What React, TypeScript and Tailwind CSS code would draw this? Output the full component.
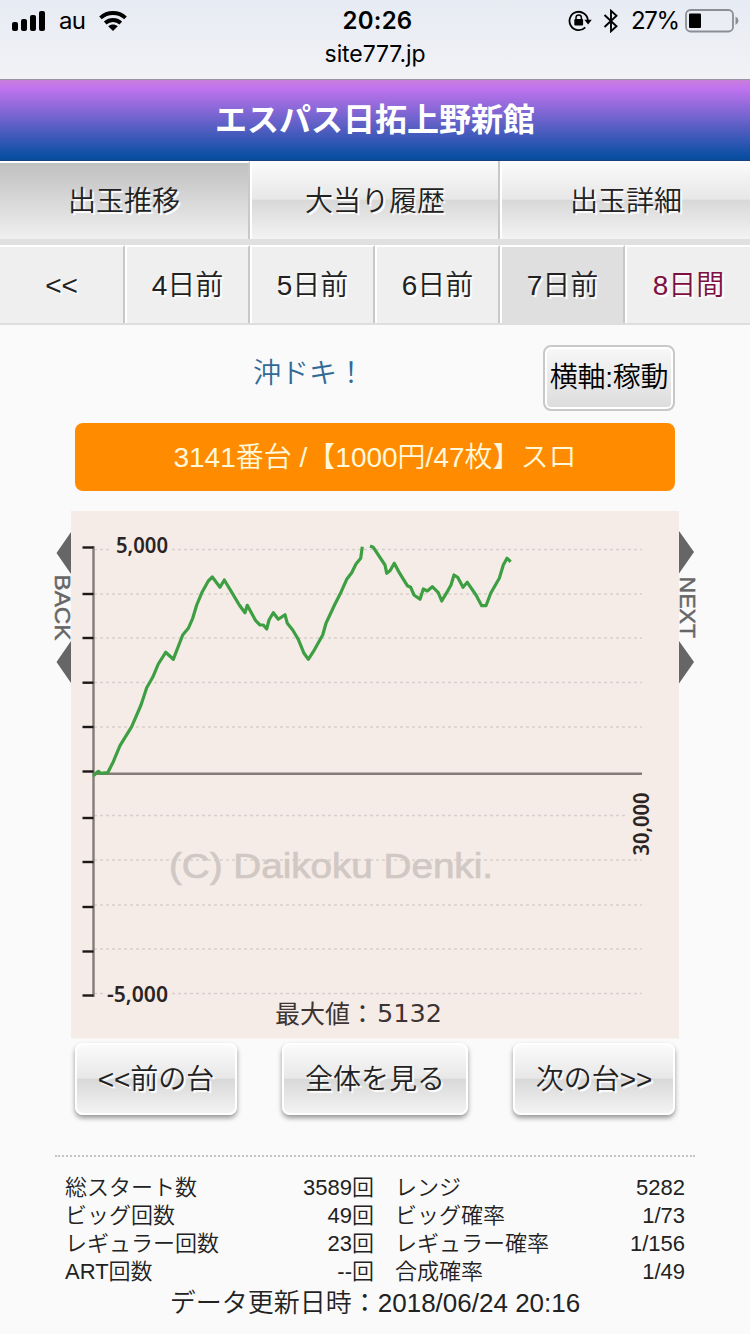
import React from "react";

const days = ["<<", "4日前", "5日前", "6日前", "7日前", "8日間"];

const stats = [
  ["総スタート数", "3589回", "レンジ", "5282"],
  ["ビッグ回数", "49回", "ビッグ確率", "1/73"],
  ["レギュラー回数", "23回", "レギュラー確率", "1/156"],
  ["ART回数", "--回", "合成確率", "1/49"],
];

const grid = [549.5, 594, 638, 682.5, 727, 815.5, 860, 905, 949, 993.5];
const ticks = [547.5, 594, 638, 682.7, 727, 771.5, 818, 862, 907, 951.5, 995.5];

const lineA =
  "93.3,775.7 98.3,771.3 100.7,773.3 107.7,772.7 113.3,761.7 120,745.7 131.7,726.7 141,705 146.7,687.7 152.7,677.3 158.3,664 165.7,652.3 173.3,659.3 182.7,635 188.3,628.3 192.7,618.3 196.7,605 202.3,591.7 208.3,581 212.3,577 220,587.3 224.3,580 230,589.3 239.3,605 245,612.7 247.3,605.3 255.7,620.7 260,625 263.3,625 266.7,629 269,620 273.3,612.7 278.3,619.3 285,614.7 287.3,623.3 292.7,630 298.3,639.3 304,653.3 308.3,659.3 313.3,651.7 322.7,635 326,623.3 335,604 340,594.3 346.7,579.3 351.7,572.7 356,564 360.7,558.3 362.3,546.7";
const lineB =
  "370,546 373.3,547.3 385,565 386.7,573.3 390,570.7 394.3,563.3 399.3,572.7 407.3,585.7 410.7,587.3 414,595 420,599.3 423.3,589 427.3,591 432.3,586.7 438.3,592.7 441.7,601 446.7,592.7 451,585 454,575 457.7,577.3 463,587.3 467.3,582.3 476,595 481.7,605.7 486,605.7 490.7,593.3 499.3,578.3 503.3,565 507,558.3 510.7,561.7";

const glossy = "bg-[linear-gradient(#fbfbfb_0%,#e7e7e7_49%,#d8d8d8_50%,#f3f3f3_100%)]";

const StatusBar: React.FC = () => (
  <header className="h-20 border-b border-[#9b93a3] bg-linear-to-b from-[#e7ebf3] to-[#f2f2f6] font-[Inter,'Liberation_Sans',sans-serif] font-normal text-black">
    <div className="grid h-10 grid-cols-3 items-center pl-3 pr-[11px] pt-0.5">
      <div className="flex items-center">
        <svg width="34" height="20" viewBox="0 0 34 20">
          <rect x="0" y="11" width="6" height="9" rx="2" />
          <rect x="9" y="8" width="6" height="12" rx="2" />
          <rect x="18" y="4" width="6" height="16" rx="2" />
          <rect x="27" y="0" width="6" height="20" rx="2" />
        </svg>
        <span className="ml-[13px] w-[27px] text-2xl tracking-[-0.8px]">au</span>
        <svg className="ml-[13px]" width="28" height="20" viewBox="0 0 28 20" fill="none" stroke="#000" strokeWidth="3.8">
          <path d="M1.5 6.8C8.5.4 19.5.4 26.5 6.8" />
          <path d="M6.2 12C10.7 8 17.3 8 21.8 12" />
          <path d="M14 20L9.2 15.3C12 13 16 13 18.8 15.3Z" fill="#000" stroke="none" />
        </svg>
      </div>
      <div className="pl-1 text-center text-2xl font-semibold tracking-[0.2px]">20:26</div>
      <div className="flex items-center justify-end">
        <svg width="24" height="22" viewBox="0 0 24 22" fill="none" stroke="#000" strokeWidth="1.8">
          <path d="M17.3 17.4A9.2 9.2 0 1 1 19.9 10.5" />
          <path d="M16.4 9.8H23.8L20.1 14.6Z" fill="#000" stroke="none" />
          <rect x="6.3" y="9" width="8.8" height="6.6" rx="1" fill="#000" stroke="none" />
          <path d="M8 9.5V7.6a2.7 2.7 0 0 1 5.4 0V9.5" strokeWidth="1.5" />
        </svg>
        <svg className="ml-[11px]" width="16" height="24" viewBox="0 0 16 24" fill="none" stroke="#000" strokeWidth="1.9">
          <path d="M1.5 6L13.5 17.2 8 22.2V1.8L13.5 6.8 1.5 18" />
        </svg>
        <span className="ml-3 w-[49px] text-2xl tracking-[-1.3px]">27%</span>
        <svg className="ml-[5px]" width="54" height="24" viewBox="0 0 54 24">
          <rect x="1" y="1" width="47" height="21.5" rx="4.5" fill="none" stroke="#8b8e94" strokeWidth="1.8" />
          <rect x="4" y="4.5" width="12" height="14.5" rx="1" />
          <path d="M50.5 7.5Q53.5 9 53.5 11.8T50.5 16Z" fill="#8b8e94" />
        </svg>
      </div>
    </div>
    <div className="text-center text-[23px] leading-7 tracking-[-0.1px]">site777.jp</div>
  </header>
);

const Chart: React.FC = () => (
  <svg className="mx-auto mt-5 block" width="650" height="528" viewBox="50 511 650 528">
    <rect x="71" y="511" width="608" height="527.5" fill="#f5ece7" />
    <g fill="#666">
      <path d="M71 532V574L56.5 553ZM71 641V683L56.5 662Z" />
      <path d="M679 531V573.500L694 552ZM679 641V683.500L694 662Z" />
      <g fontSize="22" fontFamily="Liberation Sans, sans-serif" fontWeight="400" stroke="#666" strokeWidth="0.5">
        <text transform="translate(55 574.500) rotate(90)" textLength="66" lengthAdjust="spacingAndGlyphs">BACK</text>
        <text transform="translate(679.5 576.500) rotate(90)" textLength="61.5" lengthAdjust="spacingAndGlyphs">NEXT</text>
      </g>
    </g>
    <g stroke="#d8cfcc" strokeWidth="1.5" strokeDasharray="3 3">
      {grid.map((y) => (
        <line key={y} x1="94" x2="642" y1={y} y2={y} />
      ))}
    </g>
    <text x="169" y="877.500" fontSize="35" textLength="324" lengthAdjust="spacingAndGlyphs" fontFamily="Liberation Sans, sans-serif" fontWeight="400" fill="#d1c8c4" stroke="#d1c8c4" strokeWidth="0.7">
      (C) Daikoku Denki.
    </text>
    <path d="M93.500 546V997M93.500 773.700H642" stroke="#857b78" strokeWidth="2.4" />
    <g stroke="#1d1716" strokeWidth="2.4">
      {ticks.map((y) => (
        <line key={y} x1="82.500" x2="93.500" y1={y} y2={y} />
      ))}
    </g>
    <g fill="none" stroke="#3d9f42" strokeWidth="3.2" strokeLinejoin="round">
      <polyline points={lineA} />
      <polyline points={lineB} />
    </g>
    <rect x="112" y="535" width="58" height="20" fill="#f5ece7" />
    <rect x="104" y="984" width="66" height="20" fill="#f5ece7" />
    <g fontFamily="Noto Sans, sans-serif" fontSize="22" fontWeight="600" fill="#2b2424">
      <text x="116" y="553" textLength="52" lengthAdjust="spacingAndGlyphs">5,000</text>
      <text x="107" y="1001.500" textLength="61" lengthAdjust="spacingAndGlyphs">-5,000</text>
      <rect x="628" y="792" width="24" height="65" fill="#f5ece7" />
      <text transform="translate(648.500 855.500) rotate(-90)" textLength="63" lengthAdjust="spacingAndGlyphs">30,000</text>
    </g>
    <g fill="#3d3533" fontWeight="400">
      <text x="275" y="1023" fontSize="25" fontFamily="Noto Sans CJK JP, sans-serif" textLength="100">最大値：</text>
      <text x="377" y="1022" fontSize="24" fontFamily="DejaVu Sans, sans-serif" textLength="65" lengthAdjust="spacingAndGlyphs">5132</text>
    </g>
  </svg>
);

const NavButton: React.FC<{ label: string; className: string }> = ({ label, className }) => (
  <button className={`h-[72px] rounded-lg border-2 border-white pt-0.5 text-[28px] shadow-[0_3px_5px_rgba(0,0,0,0.4)] [text-shadow:2px_2px_1px_#fff] ${glossy} ${className}`}>
    {label}
  </button>
);

const App: React.FC = () => {
  return (
    <div className="h-[1334px] w-[750px] overflow-hidden bg-[#fafafa] font-['Liberation_Sans','Noto_Sans_CJK_JP',sans-serif] font-[350] text-[#222]">
      <StatusBar />
      <h1 className="flex h-[81px] items-center justify-center border-b border-[#164080] bg-[linear-gradient(#c77fd9_0%,#c374ef_9%,#0b4fa4_95%,#0a4a98_100%)] text-[32px] font-bold text-white">
        エスパス日拓上野新館
      </h1>

      <nav className="grid h-[84px] grid-cols-3 border-b-6 border-[#e0e0e0] border-t-0 text-[28px] [text-shadow:2px_2px_1px_#fff]">
        <div className="flex items-center justify-center border-t-2 border-r-2 border-t-white border-r-[#c8c8c8] bg-linear-to-b from-[#c0c0c0] to-[#f0f0f0] pt-0.5">出玉推移</div>
        <div className={`flex items-center justify-center border-l-2 border-r-2 border-l-white border-r-[#c8c8c8] pt-1 ${glossy}`}>大当り履歴</div>
        <div className={`flex items-center justify-center border-l-2 border-l-white pt-1 ${glossy}`}>出玉詳細</div>
      </nav>

      <nav className="grid h-20 grid-cols-6 border-b-2 border-[#dedede] text-[28px] [text-shadow:2px_2px_1px_#fff]">
        {days.map((day, i) => (
          <div
            key={day}
            className={`flex items-center justify-center border-t-2 border-t-white pt-0.5 ${i > 0 ? "border-l-2 border-l-white" : ""} ${i < 5 ? "border-r-2 border-r-[#c8c8c8]" : "text-[#7d1040]"} ${i === 4 ? "bg-[#dfdfdf]" : "bg-[#efefef]"}`}
          >
            {day}
          </div>
        ))}
      </nav>

      <main>
        <div className="mx-[75px] mt-5 flex h-[66px]">
          <div className="flex-1 pl-[178px] pt-2 text-[28px] text-[#316a96]">沖ドキ！</div>
          <button className="w-[132px] rounded-lg border-2 border-[#c8c8c8] bg-linear-to-b from-[#f8f8f8] to-[#dcdcdc] text-[28px] tracking-[-0.3px] whitespace-nowrap text-black shadow-[inset_0_0_0_2px_#fff]">
            横軸:稼動
          </button>
        </div>
        <div className="mx-[75px] mt-3 flex h-[68px] items-center justify-center rounded-lg bg-[#ff8c00] pt-0.5 text-[28px] text-[#fff8dc]">
          3141番台 /【1000円/47枚】スロ
        </div>

        <Chart />

        <div className="mx-[75px] mt-1 flex justify-between">
          <NavButton label="<<前の台" className="w-[162px]" />
          <NavButton label="全体を見る" className="w-[186px]" />
          <NavButton label="次の台>>" className="w-[162px]" />
        </div>

        <div className="mx-[55px] mt-10 border-t-2 border-dotted border-[#c4c4c4] px-2.5 pt-[17px] text-[22px] leading-7">
          {stats.map(([a, b, c, d]) => (
            <div key={a} className="flex">
              <span className="w-[170px]">{a}</span>
              <span className="w-[139px] text-right">{b}</span>
              <span className="ml-[21px] w-[170px]">{c}</span>
              <span className="flex-1 text-right">{d}</span>
            </div>
          ))}
        </div>
        <div className="text-center text-[26px] leading-[34px]">データ更新日時：2018/06/24 20:16</div>
      </main>
    </div>
  );
};

export default App;
